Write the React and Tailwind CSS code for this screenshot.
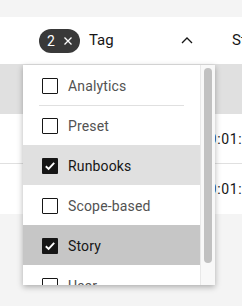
import { useState } from 'react'

const items = [
  { label: 'Analytics', checked: false },
  { label: 'Preset', checked: false },
  { label: 'Runbooks', checked: true },
  { label: 'Scope-based', checked: false },
  { label: 'Story', checked: true },
  { label: 'User', checked: false },
]

function Checkbox({ checked }) {
  if (checked) {
    return (
      <span className="flex w-4 h-4 shrink-0 items-center justify-center rounded-[1px] bg-[#161616]">
        <svg width="16" height="16" viewBox="0 0 16 16" fill="none">
          <path d="M3.8 8.2 L6.6 10.9 L12.2 4.9" stroke="white" strokeWidth="1.9" />
        </svg>
      </span>
    )
  }
  return <span className="block w-4 h-4 shrink-0 rounded-[1px] border border-[#161616] bg-white" />
}

export default function App() {
  const [hover] = useState(4)

  return (
    <div className="relative w-[242px] h-[306px] overflow-hidden bg-[#f4f4f4] font-['Roboto',sans-serif] text-[#161616]">
      <div className="h-[17px]" />

      {/* header with tag filter */}
      <div className="flex h-[47px] items-center bg-white">
        <div className="flex w-[216px] shrink-0 items-center pl-[39px] pr-[23px]">
          <div className="flex h-6 items-center rounded-full bg-[#393939] pl-2 pr-[3px] text-sm text-white">
            <span>2</span>
            <span className="ml-[4px] flex h-[18px] w-[18px] items-center justify-center">
              <svg width="10" height="10" viewBox="0 0 10 10" fill="none">
                <path d="M1.5 1.5 L8.5 8.5 M8.5 1.5 L1.5 8.5" stroke="white" strokeWidth="1.3" />
              </svg>
            </span>
          </div>
          <span className="ml-[9px] text-[15px]">Tag</span>
          <svg className="ml-auto" width="12" height="7" viewBox="0 0 12 7" fill="none">
            <path d="M1 6 L6 1 L11 6" stroke="#161616" strokeWidth="1.3" />
          </svg>
        </div>
        <div className="whitespace-nowrap pl-4 text-[15px]">Status</div>
      </div>

      {/* table rows behind */}
      <div className="h-[50px] bg-[#e0e0e0]" />
      <div className="flex h-[50px] items-center border-b border-[#e0e0e0] bg-white">
        <div className="w-[200px] shrink-0" />
        <span className="whitespace-nowrap text-sm tracking-[0.7px]">00:01:00</span>
      </div>
      <div className="flex h-[50px] items-center bg-white">
        <div className="w-[200px] shrink-0" />
        <span className="whitespace-nowrap text-sm tracking-[0.7px]">00:01:00</span>
      </div>

      {/* dropdown menu */}
      <div className="absolute left-[23px] top-[65px] flex h-[220px] w-[192px] overflow-hidden bg-white shadow-[0_2px_6px_rgba(0,0,0,0.3)]">
        <div className="flex w-[177px] shrink-0 flex-col">
          {items.map((item, i) => {
            const bg = i === hover ? 'bg-[#c6c6c6]' : item.checked ? 'bg-[#e0e0e0]' : 'bg-white'
            return (
              <div key={item.label} className={`h-10 shrink-0 ${bg}`}>
                <div
                  className={`mx-4 flex h-full items-center border-t pl-[3px] ${
                    i === 1 ? 'border-[#e0e0e0]' : 'border-transparent'
                  }`}
                >
                  <Checkbox checked={item.checked} />
                  <span
                    className={`ml-[10px] text-sm tracking-[0.16px] ${
                      item.checked ? 'text-[#161616]' : 'text-[#525252]'
                    }`}
                  >
                    {item.label}
                  </span>
                </div>
              </div>
            )
          })}
        </div>
        <div className="w-[15px] shrink-0 border-l border-[#e8e8e8] bg-[#f8f8f8] pt-[3px]">
          <div className="mx-auto h-[195px] w-2 rounded-full bg-[#c1c1c1]" />
        </div>
      </div>
    </div>
  )
}
